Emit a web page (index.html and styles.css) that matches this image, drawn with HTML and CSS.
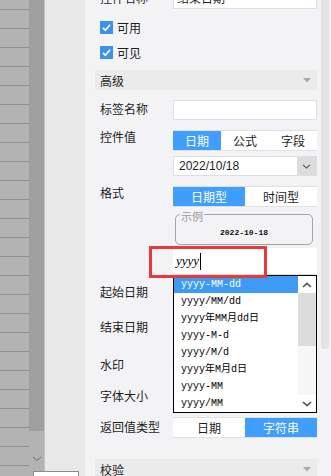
FILE: index.html
```html
<!DOCTYPE html>
<html lang="zh-CN">
<head>
  <meta charset="UTF-8" />
  <meta name="viewport" content="width=device-width, initial-scale=1.0"/>
  <title>控件属性</title>
  <link rel="stylesheet" href="styles.css">
</head>
<body>

  <div class="app">
    <!-- left: sheet area -->
    <div class="sheet">
      <div class="sheet-rows"></div>
      <div class="sheet-scroll">
        <div class="sheet-thumb"></div>
        <div class="sheet-track">
          <svg width="10" height="6" viewBox="0 0 10 6"><polyline points="1,1 5,4.5 9,1" fill="none" stroke="#6a6a6a" stroke-width="1"/></svg>
        </div>
      </div>
      <div class="sheet-edge"></div>
      <div class="sheet-gutter"></div>
      <div class="sheet-popup"></div>
    </div>

    <!-- right: property panel -->
    <div class="props">
      <div class="props-body">
        <div class="row">
          <div class="label">控件名称</div>
          <div class="ctrl"><div class="input">结束日期</div></div>
        </div>

        <div class="check check-first">
          <span class="check-box"><svg width="13" height="13" viewBox="0 0 13 13"><polyline points="3,6.8 5.4,9.2 10,3.8" fill="none" stroke="#fff" stroke-width="1.7"/></svg></span>
          <span>可用</span>
        </div>
        <div class="check">
          <span class="check-box"><svg width="13" height="13" viewBox="0 0 13 13"><polyline points="3,6.8 5.4,9.2 10,3.8" fill="none" stroke="#fff" stroke-width="1.7"/></svg></span>
          <span>可见</span>
        </div>

        <div class="section section-adv">
          <span>高级</span>
          <svg width="8" height="5" viewBox="0 0 8 5"><polygon points="0,0 8,0 4,4.5" fill="#a9a9a9"/></svg>
        </div>

        <div class="row row-gap">
          <div class="label">标签名称</div>
          <div class="ctrl"><div class="input"></div></div>
        </div>

        <div class="group row-gap">
          <div class="label">控件值</div>
          <div class="ctrl">
            <div class="seg">
              <span class="on">日期</span>
              <span>公式</span>
              <span>字段</span>
            </div>
            <div class="select">
              <div class="select-value">2022/10/18</div>
              <div class="select-btn">
                <svg width="9" height="5" viewBox="0 0 9 5"><polyline points="1,0.8 4.5,4 8,0.8" fill="none" stroke="#5c5c5c" stroke-width="1.1"/></svg>
              </div>
            </div>
          </div>
        </div>

        <div class="group row-gap">
          <div class="label">格式</div>
          <div class="ctrl">
            <div class="seg">
              <span class="on">日期型</span>
              <span>时间型</span>
            </div>
            <fieldset class="example">
              <legend>示例</legend>
              <div class="example-value">2022-10-18</div>
            </fieldset>
            <div class="format-input">
              <span class="format-text">yyyy</span><span class="caret"></span>
              <div class="mark"></div>
              <div class="format-list">
                <div class="format-items">
                  <div class="format-item on">yyyy-MM-dd</div>
                  <div class="format-item">yyyy/MM/dd</div>
                  <div class="format-item">yyyy年MM月dd日</div>
                  <div class="format-item">yyyy-M-d</div>
                  <div class="format-item">yyyy/M/d</div>
                  <div class="format-item">yyyy年M月d日</div>
                  <div class="format-item">yyyy-MM</div>
                  <div class="format-item">yyyy/MM</div>
                </div>
                <div class="list-scroll">
                  <div class="list-arrow">
                    <svg width="10" height="6" viewBox="0 0 10 6"><polyline points="1,5 5,1.3 9,5" fill="none" stroke="#555" stroke-width="1.7"/></svg>
                  </div>
                  <div class="list-thumb"></div>
                  <div class="list-track"></div>
                  <div class="list-arrow">
                    <svg width="10" height="6" viewBox="0 0 10 6"><polyline points="1,1 5,4.7 9,1" fill="none" stroke="#555" stroke-width="1.7"/></svg>
                  </div>
                </div>
              </div>
            </div>
          </div>
        </div>

        <div class="row row-start">
          <div class="label">起始日期</div>
          <div class="ctrl"><div class="input"></div></div>
        </div>
        <div class="row row-end">
          <div class="label">结束日期</div>
          <div class="ctrl"><div class="input"></div></div>
        </div>
        <div class="row row-mark">
          <div class="label">水印</div>
          <div class="ctrl"><div class="input"></div></div>
        </div>
        <div class="row row-size">
          <div class="label">字体大小</div>
          <div class="ctrl"><div class="input"></div></div>
        </div>

        <div class="row row-return">
          <div class="label">返回值类型</div>
          <div class="ctrl">
            <div class="seg">
              <span>日期</span>
              <span class="on">字符串</span>
            </div>
          </div>
        </div>

        <div class="section section-check">
          <span>校验</span>
          <svg width="8" height="5" viewBox="0 0 8 5"><polygon points="0,0 8,0 4,4.5" fill="#a9a9a9"/></svg>
        </div>
      </div>

      <div class="props-scroll">
        <div class="props-thumb"></div>
      </div>
    </div>
  </div>

</body>
</html>
```

FILE: styles.css
```css
* {
  box-sizing: border-box;
}

body {
  margin: 0;
  font-family: "Liberation Sans", "Noto Sans CJK SC", sans-serif;
  font-size: 12px;
  color: #1e1e1e;
  overflow: hidden;
}

.app {
  display: flex;
  width: 331px;
  height: 476px;
  overflow: hidden;
}

/* left sheet */
.sheet {
  position: relative;
  display: flex;
  width: 85px;
  flex-shrink: 0;
}

.sheet-rows {
  width: 29px;
  background: repeating-linear-gradient(#b3b3b3 0 9px, #8f8f8f 9px 10px, #b3b3b3 10px 19px);
}

.sheet-scroll {
  width: 15px;
  display: flex;
  flex-direction: column;
  background: #b3b3b3;
}

.sheet-thumb {
  height: 431px;
  background: #9f9f9f;
}

.sheet-track {
  flex: 1;
  display: flex;
  justify-content: center;
  padding-top: 25px;
}

.sheet-edge {
  width: 1px;
  background: #c4c4c4;
}

.sheet-gutter {
  flex: 1;
  background: #e8e8e8;
}

.sheet-popup {
  position: absolute;
  left: 33px;
  top: 471px;
  width: 46px;
  height: 12px;
  background: #fff;
  border: 1px solid #8c8c8c;
}

/* right property panel */
.props {
  display: flex;
  flex: 1;
  background: #f3f3f5;
  overflow: hidden;
}

.props-body {
  width: 232px;
  padding-left: 10px;
  margin-top: -11px;
}

.props-scroll {
  width: 8px;
  margin-left: 4px;
}

.props-thumb {
  height: 349px;
  background: #e3e3e3;
  border-radius: 0 0 4px 4px;
}

.row {
  display: flex;
  align-items: center;
  height: 20px;
}

.group {
  display: flex;
  align-items: flex-start;
}

.label {
  width: 78px;
  flex-shrink: 0;
  padding-left: 5px;
  line-height: 16px;
  white-space: nowrap;
}

.ctrl {
  width: 144px;
}

.input {
  height: 20px;
  background: #fff;
  border: 1px solid #dcdfe6;
  padding-left: 3px;
  line-height: 18px;
}

.row-gap { margin-top: 10px; }
.row-start { margin-top: 8px; }
.row-end { margin-top: 15px; }
.row-mark { margin-top: 18px; }
.row-size { margin-top: 11px; }
.row-return { margin-top: 10px; height: 21px; }

/* checkboxes */
.check {
  display: flex;
  align-items: center;
  gap: 4px;
  height: 19px;
  margin-top: 6px;
  padding-left: 5px;
}

.check-first {
  margin-top: 9px;
}

.check-box {
  display: flex;
  width: 13px;
  height: 13px;
  background: #3d8ff0;
}

/* collapsible headers */
.section {
  display: flex;
  align-items: center;
  justify-content: space-between;
  height: 20px;
  padding: 0 6px 0 5px;
  background: #ebebeb;
}

.section-adv { margin-top: 8px; }
.section-check { margin-top: 21px; }

/* segmented buttons */
.seg {
  display: flex;
  height: 21px;
  background: #fff;
  border-top: 1px solid #e1e1e1;
  border-bottom: 1px solid #e1e1e1;
}

.seg span {
  flex: 1;
  display: flex;
  align-items: center;
  justify-content: center;
}

.seg .on {
  background: #409eff;
  color: #fff;
}

.select {
  display: flex;
  height: 20px;
  margin-top: 5px;
  background: #fff;
  border: 1px solid #dcdfe6;
}

.select-value {
  flex: 1;
  padding-left: 5px;
  line-height: 18px;
}

.select-btn {
  width: 19px;
  display: flex;
  align-items: center;
  justify-content: center;
  background: #dcdcdc;
}

/* example box */
.example {
  margin: -2px 4px 0 2px;
  padding: 0 4px 1px;
  min-width: 0;
  border: 1px solid #a5a5a5;
  border-radius: 5px;
}

.example legend {
  padding: 6px 1px 0;
  font-size: 11px;
  line-height: 12px;
  color: #9a9a9a;
}

.example-value {
  text-align: center;
  font-family: "Liberation Mono", monospace;
  font-size: 8px;
  font-weight: bold;
  line-height: 20px;
  color: #111;
}

/* custom format input */
.format-input {
  position: relative;
  display: flex;
  align-items: center;
  height: 27px;
  margin-top: 3px;
  padding-left: 3px;
  background: #fff;
  border-bottom: 1px solid #dedede;
}

.format-text {
  font-family: "Liberation Serif", serif;
  font-style: italic;
  font-size: 13px;
  color: #000;
}

.caret {
  width: 1px;
  height: 17px;
  margin-left: 1px;
  background: #000;
}

.mark {
  position: absolute;
  left: -24px;
  top: -2px;
  width: 118px;
  height: 32px;
  border: 3px solid #e8393c;
  z-index: 2;
}

.format-list {
  position: absolute;
  left: 0;
  top: 27px;
  display: flex;
  width: 144px;
  height: 138px;
  background: #fff;
  border: 1px solid #000;
  z-index: 1;
}

.format-items {
  flex: 1;
}

.format-item {
  height: 17px;
  padding-left: 7px;
  line-height: 17px;
  font-family: "Liberation Mono", "Noto Sans CJK SC", monospace;
  font-size: 10px;
  white-space: nowrap;
  color: #000;
}

.format-item.on {
  background: #3d9bf5;
  color: #fff;
}

.list-scroll {
  width: 18px;
  display: flex;
  flex-direction: column;
}

.list-arrow {
  height: 17px;
  display: flex;
  align-items: center;
  justify-content: center;
}

.list-thumb {
  height: 53px;
  background: #dcdcdc;
}

.list-track {
  flex: 1;
  background: #f7f7f5;
}
```
